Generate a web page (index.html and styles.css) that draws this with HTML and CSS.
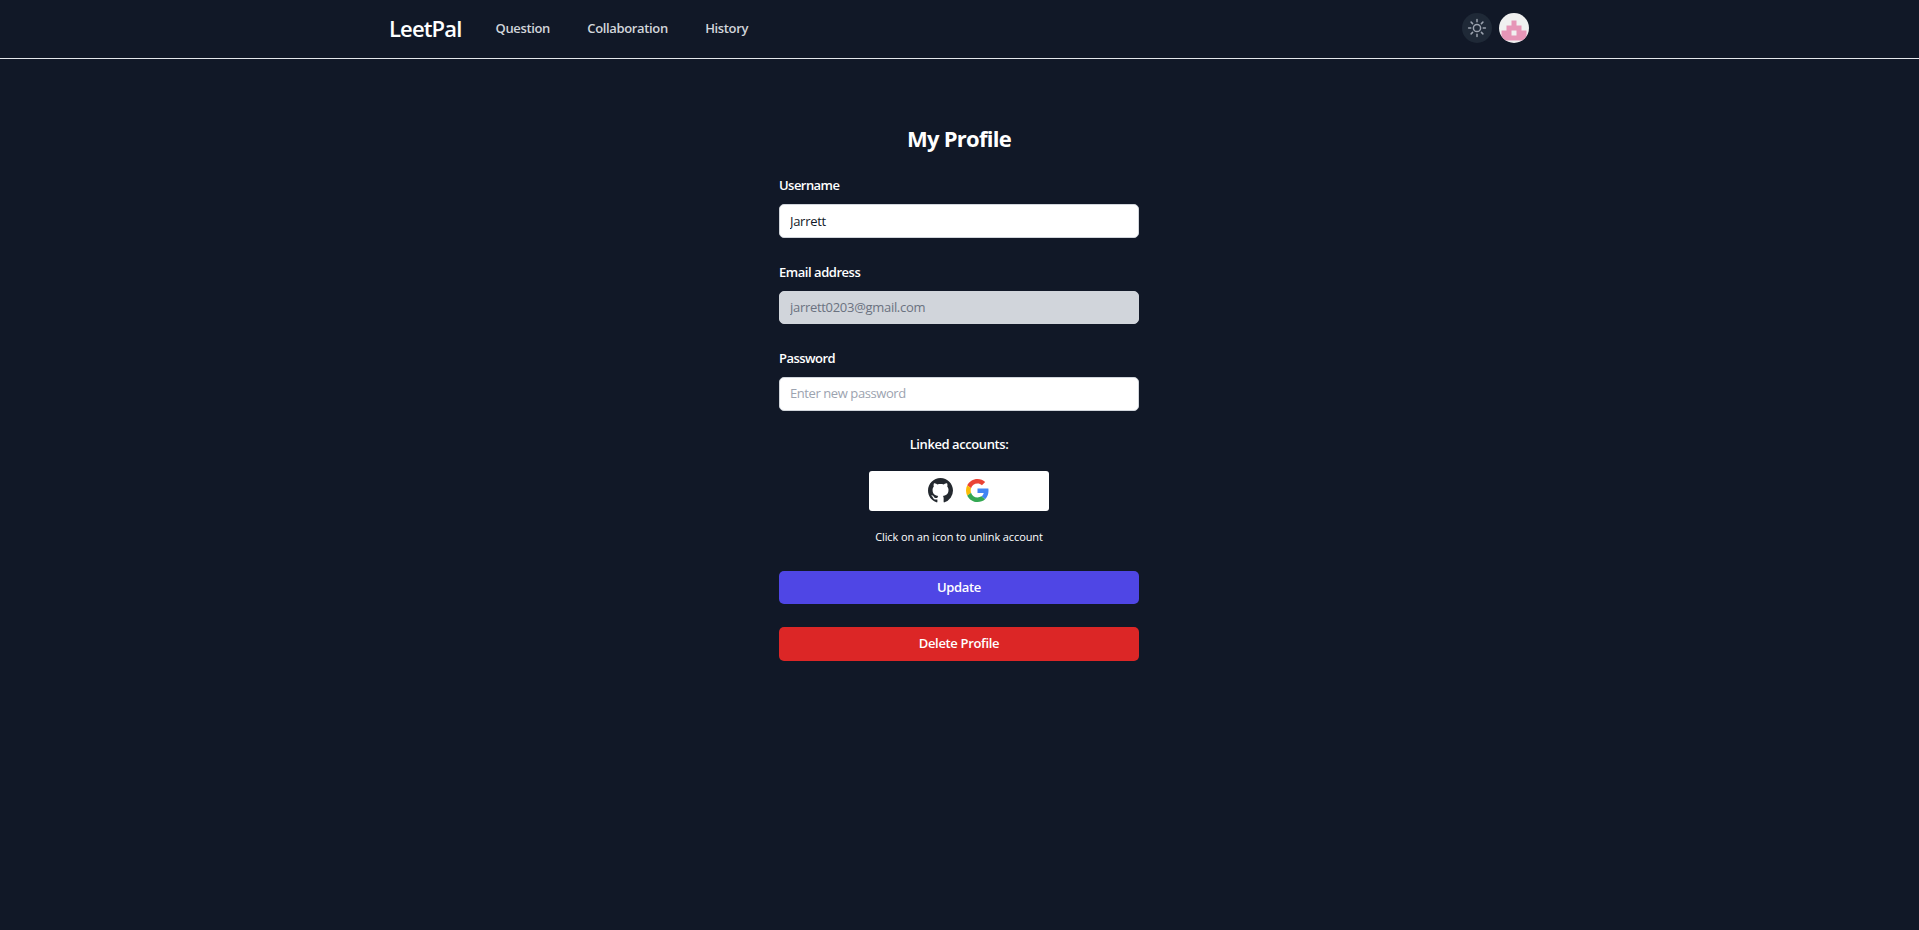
FILE: index.html
```html
<!DOCTYPE html>
<html lang="en">
<head>
<meta charset="utf-8">
<title>LeetPal</title>
<link rel="stylesheet" href="styles.css">
</head>
<body>
<header class="header">
  <div class="header-inner">
    <a class="brand">LeetPal</a>
    <nav class="nav">
      <a class="nav-link">Question</a>
      <a class="nav-link">Collaboration</a>
      <a class="nav-link">History</a>
    </nav>
    <div class="actions">
      <button class="theme" aria-label="Toggle theme">
        <svg width="20" height="20" viewBox="0 0 20 20" fill="none" stroke="#9ca3af" stroke-width="1.5" stroke-linecap="round"><circle cx="10" cy="10" r="3.6"/><path d="M10 1.6v2.2M10 16.2v2.2M1.6 10h2.2M16.2 10h2.2M4.1 4.1l1.5 1.5M14.4 14.4l1.5 1.5M4.1 15.9l1.5-1.5M14.4 5.6l1.5-1.5"/></svg>
      </button>
      <svg class="avatar" width="30" height="30" viewBox="0 0 30 30"><rect width="30" height="30" fill="#f0f0f0"/><path fill="#e695b7" d="M12.5 7.5h5v5h5v5h5v10h-25v-10h5v-5h5z"/><path fill="#f0f0f0" d="M12.5 17.5h5v5h-5z"/></svg>
    </div>
  </div>
</header>
<main class="profile">
  <h1 class="title">My Profile</h1>
  <form class="form">
    <label class="label" for="u">Username</label>
    <input class="input" id="u" type="text" value="Jarrett">
    <label class="label label-email" for="e">Email address</label>
    <input class="input input-disabled" id="e" type="text" value="jarrett0203@gmail.com" disabled>
    <label class="label" for="p">Password</label>
    <input class="input input-password" id="p" type="password" placeholder="Enter new password">
    <p class="linked">Linked accounts:</p>
    <div class="accounts">
      <svg width="25" height="25" viewBox="0 0 16 16"><path fill="#24292f" fill-rule="evenodd" d="M8 0C3.58 0 0 3.58 0 8c0 3.54 2.29 6.53 5.47 7.59.4.07.55-.17.55-.38 0-.19-.01-.82-.01-1.49-2.01.37-2.53-.49-2.69-.94-.09-.23-.48-.94-.82-1.13-.28-.15-.68-.52-.01-.53.63-.01 1.08.58 1.23.82.72 1.21 1.87.87 2.33.66.07-.52.28-.87.51-1.07-1.78-.2-3.64-.89-3.64-3.95 0-.87.31-1.59.82-2.15-.08-.2-.36-1.02.08-2.12 0 0 .67-.21 2.2.82.64-.18 1.32-.27 2-.27s1.36.09 2 .27c1.53-1.04 2.2-.82 2.2-.82.44 1.1.16 1.92.08 2.12.51.56.82 1.27.82 2.15 0 3.07-1.87 3.75-3.65 3.95.29.25.54.73.54 1.48 0 1.07-.01 1.93-.01 2.2 0 .21.15.46.55.38A8.01 8.01 0 0 0 16 8c0-4.42-3.58-8-8-8z"/></svg>
      <svg width="23" height="23" viewBox="0 0 48 48"><path fill="#ea4335" d="M24 9.5c3.54 0 6.71 1.22 9.21 3.6l6.85-6.85C35.9 2.38 30.47 0 24 0 14.62 0 6.51 5.38 2.56 13.22l7.98 6.19C12.43 13.72 17.74 9.5 24 9.5z"/><path fill="#4285f4" d="M46.98 24.55c0-1.57-.15-3.09-.38-4.55H24v9.02h12.94c-.58 2.96-2.26 5.48-4.78 7.18l7.73 6c4.51-4.18 7.09-10.36 7.09-17.65z"/><path fill="#fbbc05" d="M10.53 28.59c-.48-1.45-.76-2.99-.76-4.59s.27-3.14.76-4.59l-7.98-6.19C.92 16.46 0 20.12 0 24s.92 7.54 2.56 10.78z"/><path fill="#34a853" d="M24 48c6.48 0 11.93-2.13 15.89-5.81l-7.73-6c-2.15 1.45-4.92 2.3-8.16 2.3-6.26 0-11.57-4.22-13.47-9.91l-7.98 6.19C6.51 42.62 14.62 48 24 48z"/></svg>
    </div>
    <p class="hint">Click on an icon to unlink account</p>
    <button class="btn btn-update" type="button">Update</button>
    <button class="btn btn-delete" type="button">Delete Profile</button>
  </form>
</main>
</body>
</html>
```
FILE: styles.css
```css
* { box-sizing: border-box; }
body {
  margin: 0;
  min-height: 930px;
  background: #111827;
  color: #fff;
  font-family: "Open Sans", "Noto Sans", sans-serif;
  font-size: 13px;
}
.header { height: 59px; padding-right: 1px; border-bottom: 1px solid #e5e7eb; }
.header-inner { display: flex; align-items: center; width: 1140px; height: 56px; margin: 0 auto; }
.brand { width: 106.5px; font-size: 22px; font-weight: 600; line-height: 30px; letter-spacing: -0.85px; }
.nav { display: flex; gap: 37.3px; color: #d1d5db; font-weight: 600; line-height: 18px; }
.nav-link { letter-spacing: -0.35px; }
.actions { display: flex; gap: 7px; margin-left: auto; }
.theme {
  display: grid; place-items: center; width: 30px; height: 30px; padding: 0;
  border: 0; border-radius: 50%; background: #1f2937;
}
.avatar { border-radius: 50%; }
.profile { width: 361px; margin: 63px auto 0; padding-right: 1px; }
.title { margin: 0; height: 32px; font-size: 22px; line-height: 32px; font-weight: 700; letter-spacing: -0.75px; text-align: center; }
.form { display: flex; flex-direction: column; margin-top: 21px; }
.label { height: 29px; line-height: 21px; font-weight: 600; letter-spacing: -0.55px; }
.label-email { letter-spacing: -0.46px; }
.input {
  width: 100%; height: 34px; margin: 0 0 24px; padding: 0 10px 1px;
  border: 1px solid #d1d5db; border-radius: 5px; background: #fff; color: #111827;
  font: 13px "Open Sans", "Noto Sans", sans-serif; letter-spacing: -0.3px;
}
.input::placeholder { color: #9ca3af; opacity: 1; }
.input-disabled { height: 33px; padding-bottom: 2px; background: #d1d5db; color: #6b7280; }
.input-password { padding-bottom: 2px; letter-spacing: -0.42px; }
.linked { margin: -1px 0 0; line-height: 21px; font-weight: 600; letter-spacing: -0.42px; text-align: center; }
.accounts {
  display: flex; align-items: center; justify-content: center; gap: 13px;
  width: 180px; height: 40px; margin: 16px auto 0; padding: 0 2px 1px 0; border-radius: 3px; background: #fff;
}
.hint { margin: 17px 0 0; line-height: 18px; font-size: 11px; letter-spacing: -0.1px; text-align: center; }
.btn {
  height: 33px; margin: 25px 0 0; padding: 0 0 2px; border: 0; border-radius: 5px; color: #fff;
  font: 600 13px "Open Sans", "Noto Sans", sans-serif; letter-spacing: -0.33px;
}
.btn-update { background: #4f46e5; }
.btn-delete { height: 34px; margin-top: 23px; background: #dc2626; }
```
